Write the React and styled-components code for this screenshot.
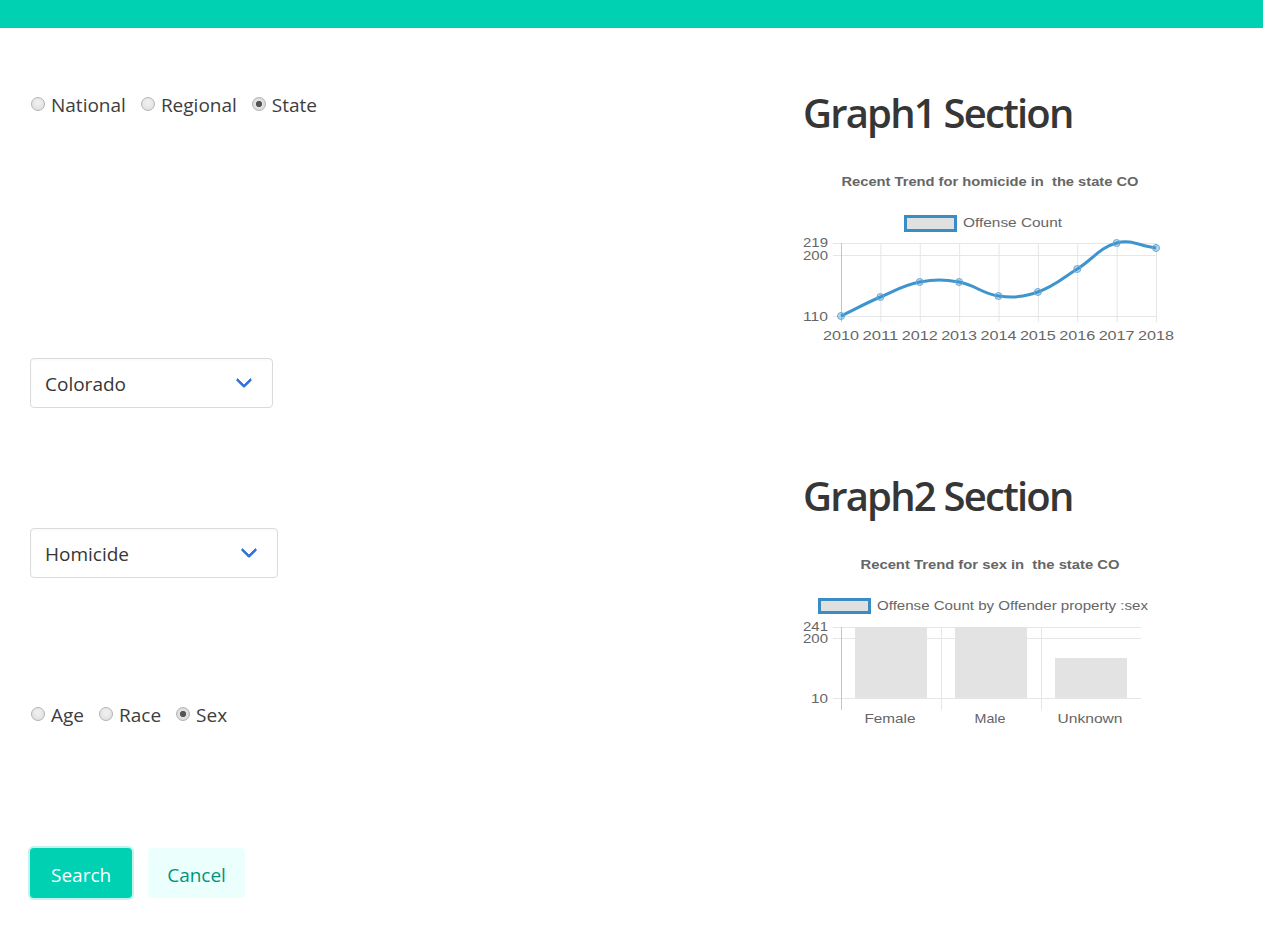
import React from "react";
import styled, { createGlobalStyle } from "styled-components";

const GlobalStyle = createGlobalStyle`
  html, body { margin: 0; padding: 0; background: #fff; }
  body { font-family: "Open Sans", "Noto Sans", sans-serif; color: #4a4a4a; }
  * { box-sizing: border-box; }
`;

const TopBar = styled.div`
  height: 28px;
  background: #00d1b2;
`;

const Page = styled.div`
  display: grid;
  grid-template-columns: 773px 1fr;
  padding-left: 30px;
  min-height: 899px;
`;

const LeftColumn = styled.div`
  display: flex;
  flex-direction: column;
  align-items: flex-start;
`;

const RightColumn = styled.div`
  display: flex;
  flex-direction: column;
`;

const Field = styled.div`
  margin-top: ${(p) => p.$top}px;
`;

const RadioGroup = styled.div`
  display: flex;
  align-items: center;
  height: 30px;
  gap: 14px;
`;

const RadioLabel = styled.label`
  display: inline-flex;
  align-items: center;
  gap: 6px;
  font-size: 19px;
  line-height: 30px;
  color: #3d3d3d;
  cursor: pointer;
`;

const RadioInput = styled.input.attrs({ type: "radio" })`
  appearance: none;
  margin: 0 0 0 1px;
  width: 14px;
  height: 14px;
  border-radius: 50%;
  border: 1px solid #b3b3b3;
  background: radial-gradient(circle at 50% 40%, #f2f2f2 0%, #dcdcdc 100%);
  position: relative;
  top: -1px;
  &:checked {
    background: radial-gradient(circle, #555 0 2.8px, #e4e4e4 3.4px, #d0d0d0 100%);
  }
`;

const SelectBox = styled.div`
  position: relative;
  width: ${(p) => p.$width}px;
  height: 50px;
  border: 1px solid #dbdbdb;
  border-radius: 4px;
  background: #fff;
  display: flex;
  align-items: center;
  padding-left: 14px;
  padding-top: 2px;
  font-size: 19px;
  color: #363636;
  box-shadow: inset 0 0.0625em 0.125em rgba(10, 10, 10, 0.03);
`;

const Arrow = styled.span`
  position: absolute;
  right: 22px;
  top: 50%;
  width: 12px;
  height: 12px;
  margin-top: -9px;
  border: 3px solid #3273dc;
  border-radius: 2px;
  border-right: 0;
  border-top: 0;
  transform: rotate(-45deg);
`;

const Buttons = styled.div`
  display: flex;
  gap: 16px;
`;

const Button = styled.button`
  height: 50px;
  padding: 3px ${(p) => p.$pad}px 0;
  border: 1px solid transparent;
  border-radius: 4px;
  font-family: inherit;
  font-size: 19px;
  cursor: pointer;
  background: ${(p) => (p.$primary ? "#00d1b2" : "#ebfffc")};
  color: ${(p) => (p.$primary ? "#fff" : "#00947e")};
  box-shadow: ${(p) =>
    p.$primary ? "0 0 0 2px rgba(0, 209, 178, 0.25)" : "none"};
`;

const Heading = styled.h2`
  margin: 0;
  margin-top: ${(p) => p.$top}px;
  font-size: 40px;
  font-weight: 600;
  line-height: 45px;
  color: #363636;
  letter-spacing: -1.8px;
`;

const ChartSvg = styled.svg`
  display: block;
  margin-top: 15px;
  overflow: visible;
`;

const ChartText = styled.text`
  font-family: "Liberation Sans", Arial, sans-serif;
  font-size: ${(p) => p.$size || 13}px;
  font-weight: ${(p) => (p.$bold ? 700 : 400)};
  fill: #666;
  white-space: pre;
`;

const BLUE = "#3e95cd";
const GRID = "#e6e6e6";

function Label({ x, y, w, anchor = "middle", size, bold, children }) {
  return (
    <ChartText
      x={x}
      y={y}
      $size={size}
      $bold={bold}
      textAnchor={anchor}
      dominantBaseline="central"
      textLength={w}
      lengthAdjust="spacingAndGlyphs"
    >
      {children}
    </ChartText>
  );
}

function spline(pts, t = 0.4) {
  const cps = pts.map((p, i) => {
    const prev = pts[i - 1] || p;
    const next = pts[i + 1] || p;
    const d01 = Math.hypot(p.x - prev.x, p.y - prev.y);
    const d12 = Math.hypot(next.x - p.x, next.y - p.y);
    const s01 = d01 / (d01 + d12) || 0;
    const s12 = d12 / (d01 + d12) || 0;
    const fa = t * s01;
    const fb = t * s12;
    return {
      px: p.x - fa * (next.x - prev.x),
      py: p.y - fa * (next.y - prev.y),
      nx: p.x + fb * (next.x - prev.x),
      ny: p.y + fb * (next.y - prev.y),
    };
  });
  let d = `M${pts[0].x},${pts[0].y}`;
  for (let i = 1; i < pts.length; i++) {
    d += ` C${cps[i - 1].nx},${cps[i - 1].ny} ${cps[i].px},${cps[i].py} ${pts[i].x},${pts[i].y}`;
  }
  return d;
}

const years = ["2010", "2011", "2012", "2013", "2014", "2015", "2016", "2017", "2018"];
const lineY = [166, 147, 132, 132, 146, 142, 119, 93, 98];

function LineChart() {
  const xs = years.map((_, i) => 38 + i * 39.375);
  const pts = xs.map((x, i) => ({ x, y: lineY[i] }));
  return (
    <ChartSvg width="380" height="200" viewBox="0 0 380 200">
      <Label x={187} y={32} w={297} size={12} bold>
        Recent Trend for homicide in  the state CO
      </Label>
      <rect x={102.5} y={66.5} width={50} height={14} fill="#e0e0e0" stroke="#3a8cc4" strokeWidth={3} />
      <Label x={160} y={72} w={99} anchor="start">Offense Count</Label>
      {[93, 105, 166].map((y) => (
        <line key={y} x1={30} x2={353} y1={y + 0.5} y2={y + 0.5} stroke={GRID} />
      ))}
      {xs.map((x, i) => (
        <line key={x} x1={x + 0.5} x2={x + 0.5} y1={93} y2={172} stroke={i === 0 ? "#c4c4c4" : GRID} />
      ))}
      <Label x={25} y={92} w={25} anchor="end">219</Label>
      <Label x={25} y={105} w={25} anchor="end">200</Label>
      <Label x={25} y={166} w={25} anchor="end">110</Label>
      {years.map((yr, i) => (
        <Label key={yr} x={xs[i]} y={185} w={36}>{yr}</Label>
      ))}
      <path d={spline(pts)} fill="none" stroke={BLUE} strokeWidth={3} />
      {pts.map((p) => (
        <circle key={p.x} cx={p.x} cy={p.y} r={3.5} fill="rgba(62,149,205,0.35)" stroke="#6aa9d6" strokeWidth={1} />
      ))}
    </ChartSvg>
  );
}

const bars = [
  { label: "Female", x: 52, top: 94, w: 51 },
  { label: "Male", x: 152, top: 94, w: 31 },
  { label: "Unknown", x: 252, top: 125, w: 65 },
];

function BarChart() {
  return (
    <ChartSvg width="380" height="200" viewBox="0 0 380 200">
      <Label x={187} y={32} w={259} size={12} bold>
        Recent Trend for sex in  the state CO
      </Label>
      <rect x={16.5} y={66.5} width={50} height={13} fill="#e0e0e0" stroke="#3a8cc4" strokeWidth={3} />
      <Label x={74} y={72} w={271} anchor="start">Offense Count by Offender property :sex</Label>
      {[94, 105, 165].map((y) => (
        <line key={y} x1={30} x2={338} y1={y + 0.5} y2={y + 0.5} stroke={GRID} />
      ))}
      {[38, 138, 238].map((x, i) => (
        <line key={x} x1={x + 0.5} x2={x + 0.5} y1={94} y2={177} stroke={i === 0 ? "#c4c4c4" : GRID} />
      ))}
      {bars.map((b) => (
        <rect key={b.label} x={b.x} y={b.top} width={72} height={165 - b.top} fill="#e3e3e3" />
      ))}
      <Label x={25} y={93} w={25} anchor="end">241</Label>
      <Label x={25} y={105} w={25} anchor="end">200</Label>
      <Label x={25} y={165} w={17} anchor="end">10</Label>
      {bars.map((b) => (
        <Label key={b.label} x={b.x + 35} y={185} w={b.w}>{b.label}</Label>
      ))}
    </ChartSvg>
  );
}

function Radios({ name, options, checked }) {
  return (
    <RadioGroup>
      {options.map((o) => (
        <RadioLabel key={o}>
          <RadioInput name={name} defaultChecked={o === checked} />
          {o}
        </RadioLabel>
      ))}
    </RadioGroup>
  );
}

export default function App() {
  return (
    <>
      <GlobalStyle />
      <TopBar />
      <Page>
        <LeftColumn>
          <Field $top={62}>
            <Radios name="scope" options={["National", "Regional", "State"]} checked="State" />
          </Field>
          <Field $top={238}>
            <SelectBox $width={243}>
              Colorado
              <Arrow />
            </SelectBox>
          </Field>
          <Field $top={120}>
            <SelectBox $width={248}>
              Homicide
              <Arrow />
            </SelectBox>
          </Field>
          <Field $top={122}>
            <Radios name="prop" options={["Age", "Race", "Sex"]} checked="Sex" />
          </Field>
          <Field $top={118}>
            <Buttons>
              <Button $primary $pad={20}>Search</Button>
              <Button $pad={18}>Cancel</Button>
            </Buttons>
          </Field>
        </LeftColumn>
        <RightColumn>
          <Heading $top={62}>Graph1 Section</Heading>
          <LineChart />
          <Heading $top={123}>Graph2 Section</Heading>
          <BarChart />
        </RightColumn>
      </Page>
    </>
  );
}
